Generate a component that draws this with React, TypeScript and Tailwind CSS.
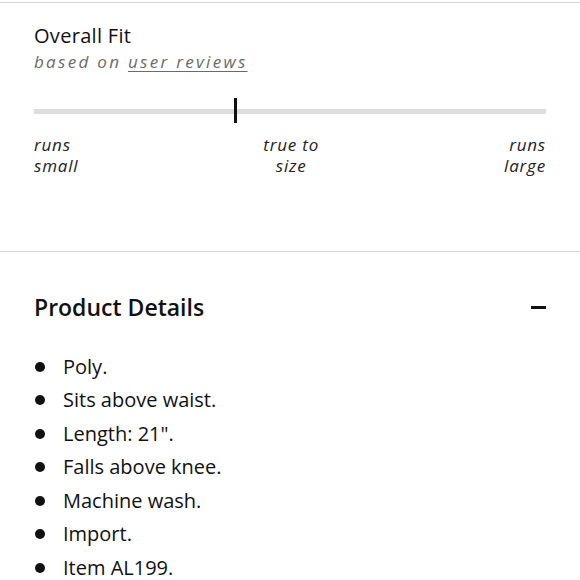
import React from "react";

const items = [
  "Poly.",
  "Sits above waist.",
  "Length: 21\".",
  "Falls above knee.",
  "Machine wash.",
  "Import.",
  "Item AL199.",
];

export default function App() {
  return (
    <div className="w-[580px] h-[580px] overflow-hidden bg-white text-[#111] font-['Open_Sans','Noto_Sans',sans-serif]">
      <div className="h-[2px]" />
      <div className="border-t border-[#d6d6d6]" />
      <section className="px-[34px] pt-[20px] h-[248px]">
        <h2 className="text-[20px] leading-[26px] font-normal tracking-[0.3px]">Overall Fit</h2>
        <p className="text-[17px] leading-[26px] italic text-[#6b6b6b] tracking-[2.3px]">
          based on <span className="underline underline-offset-[3px] decoration-[1px]">user reviews</span>
        </p>
        <div className="relative mt-[23px] h-[26px] flex items-center">
          <div className="w-full h-[5px] bg-[#dedede]" />
          <div className="absolute left-[200px] top-0 w-[3px] h-[25px] bg-[#111]" />
        </div>
        <div className="mt-[10px] flex justify-between text-[17px] leading-[21px] italic text-[#222] tracking-[0.8px]">
          <div className="text-left">runs<br />small</div>
          <div className="text-center">true to<br />size</div>
          <div className="text-right">runs<br />large</div>
        </div>
      </section>
      <div className="border-t border-[#d6d6d6]" />
      <section className="px-[34px]">
        <div className="flex items-center justify-between pt-[27px] h-[83px]">
          <h2 className="text-[23px] font-semibold leading-[30px]">Product Details</h2>
          <div className="w-[15px] h-[3px] bg-[#111]" />
        </div>
        <ul className="flex flex-col mt-[15px]">
          {items.map((t) => (
            <li key={t} className="flex items-center h-[33.5px] text-[20px]">
              <span className="w-[10px] h-[10px] rounded-full bg-[#111] ml-[1px] mr-[18px]" />
              <span>{t}</span>
            </li>
          ))}
        </ul>
      </section>
    </div>
  );
}
